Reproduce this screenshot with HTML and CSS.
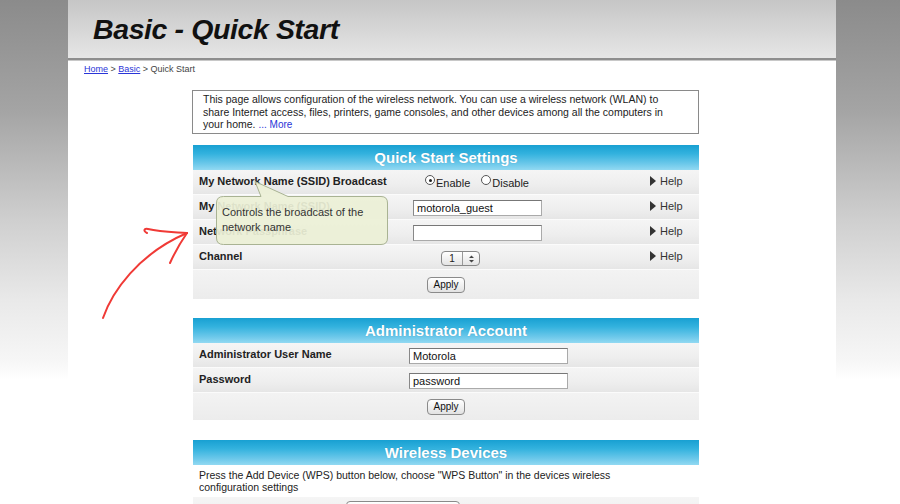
FILE: index.html
```html
<!DOCTYPE html>
<html>
<head>
<meta charset="utf-8">
<title>Basic - Quick Start</title>
<link rel="stylesheet" href="styles.css">
</head>
<body>
<div class="page">
  <header class="masthead">
    <h1 class="title">Basic - Quick Start</h1>
  </header>
  <div class="crumbs"><a href="#">Home</a> &gt; <a href="#">Basic</a> &gt; Quick Start</div>

  <div class="info">This page allows configuration of the wireless network. You can use a wireless network (WLAN) to<br>share Internet access, files, printers, game consoles, and other devices among all the computers in<br>your home. <a class="more" href="#">... More</a></div>

  <section class="panel qs">
    <div class="panel-head">Quick Start Settings</div>
    <div class="row">
      <div class="label">My Network Name (SSID) Broadcast</div>
      <div class="ctl ctl-radio">
        <span class="radio on"></span><span class="rlabel">Enable</span>
        <span class="radio"></span><span class="rlabel">Disable</span>
      </div>
      <div class="help"><span class="tri"></span>Help</div>
    </div>
    <div class="row">
      <div class="label">My Network Name (SSID)</div>
      <div class="ctl"><span class="input">motorola_guest</span></div>
      <div class="help"><span class="tri"></span>Help</div>
    </div>
    <div class="row">
      <div class="label">Network Passphrase</div>
      <div class="ctl"><span class="input"></span></div>
      <div class="help"><span class="tri"></span>Help</div>
    </div>
    <div class="row">
      <div class="label">Channel</div>
      <div class="ctl ctl-select">
        <span class="select"><span class="sval">1</span><span class="sarrows"><svg width="7" height="10" viewBox="0 0 7 10"><path d="M1 4 L3.5 1.5 L6 4 Z M1 6 L3.5 8.5 L6 6 Z" fill="#444"/></svg></span></span>
      </div>
      <div class="help"><span class="tri"></span>Help</div>
    </div>
    <div class="row row-btn"><span class="btn">Apply</span></div>
  </section>

  <section class="panel admin">
    <div class="panel-head">Administrator Account</div>
    <div class="row row-admin">
      <div class="label">Administrator User Name</div>
      <div class="ctl"><span class="input wide">Motorola</span></div>
    </div>
    <div class="row row-admin">
      <div class="label">Password</div>
      <div class="ctl"><span class="input wide">password</span></div>
    </div>
    <div class="row row-btn row-btn2"><span class="btn">Apply</span></div>
  </section>

  <section class="panel wd">
    <div class="panel-head">Wireless Devices</div>
    <p class="wd-text">Press the Add Device (WPS) button below, choose "WPS Button" in the devices wireless<br>configuration settings</p>
    <div class="row row-wps"><span class="btn btn-wps">Add Device (WPS)</span></div>
  </section>

  <div class="tooltip">
    <svg class="tip-shape" width="180" height="70" viewBox="0 0 180 70">
      <path d="M8.5 15.5 H46 L40 0.5 L73 15.5 H166 Q172.5 15.5 172.5 22 V57 Q172.5 63.5 166 63.5 H8.5 Q1.5 63.5 1.5 57 V22 Q1.5 15.5 8.5 15.5 Z" fill="rgba(236,240,214,0.93)" stroke="#a9b393" stroke-width="1"/>
    </svg>
    <div class="tip-text">Controls the broadcast of the<br>network name</div>
  </div>
</div>

<svg class="arrow" width="260" height="340" viewBox="0 0 260 340">
  <path d="M103 318 C112 292 138 254 187 233" fill="none" stroke="#f03a36" stroke-width="2" stroke-linecap="round"/>
  <path d="M187 233 C172 232 160 232 148 229 C144 228 143 231 147 233" fill="none" stroke="#f03a36" stroke-width="2" stroke-linecap="round"/>
  <path d="M187 233 C180 243 175 252 170 263" fill="none" stroke="#f03a36" stroke-width="2" stroke-linecap="round"/>
</svg>
</body>
</html>
```
FILE: styles.css
```css
html, body {
  margin: 0;
  padding: 0;
  height: 504px;
  overflow: hidden;
}
body {
  font-family: "Liberation Sans", Arial, sans-serif;
  color: #222;
  background: linear-gradient(to bottom, #8b8b8b 0px, #a4a4a4 110px, #cfcfcf 220px, #e9e9e9 300px, #f6f6f6 360px, #ffffff 380px);
  position: relative;
}
.page {
  width: 768px;
  margin-left: 68px;
  height: 504px;
  background: #fff;
  position: relative;
}
.masthead {
  height: 58px;
  background: linear-gradient(to bottom, #c6c6c6 0%, #d6d6d6 50%, #e6e6e6 100%);
  border-bottom: 2px solid #8e8e8e;
  box-shadow: 0 1px 0 #c8c8c8;
}
.title {
  margin: 0;
  padding: 15px 0 0 25px;
  font-size: 28.5px;
  line-height: 28px;
  font-weight: bold;
  font-style: italic;
  letter-spacing: -0.4px;
  color: #111;
}
.crumbs {
  margin-top: 3px;
  padding-left: 16px;
  font-size: 9px;
  line-height: 12px;
  color: #444;
}
.crumbs a {
  color: #2a35d8;
  text-decoration: underline;
}
.info {
  margin: 15px 0 0 124px;
  width: 486px;
  padding: 2px 9px 2px 10px;
  border: 1px solid #8a8a8a;
  font-size: 10.5px;
  line-height: 12.5px;
  color: #222;
  height: 38px;
}
.info .more {
  color: #2a35d8;
  text-decoration: none;
  font-size: 10px;
}
.panel {
  margin-left: 125px;
  width: 506px;
}
.qs { margin-top: 11px; }
.admin { margin-top: 19px; }
.wd { margin-top: 20px; }
.panel-head {
  height: 25px;
  line-height: 25px;
  text-align: center;
  color: #fff;
  font-weight: bold;
  font-size: 15px;
  background: linear-gradient(to bottom, #18a0d2 0%, #33b2de 35%, #6cc8ea 75%, #92d9f2 100%);
  text-shadow: 0 0 1px rgba(0,60,100,0.3);
}
.row {
  height: 24px;
  border-bottom: 1px solid #fbfbfb;
  background: linear-gradient(to bottom, #f5f5f5 0%, #eeeeee 60%, #e6e6e6 100%);
  display: grid;
  grid-template-columns: 220px 237px 49px;
  align-items: center;
  font-size: 11px;
}
.label {
  padding-left: 6px;
  font-weight: bold;
  color: #222;
  padding-bottom: 3px;
}
.ctl {
  display: flex;
  align-items: center;
}
.ctl-radio {
  padding-left: 12px;
  padding-bottom: 2px;
}
.radio {
  width: 10px;
  height: 10px;
  border: 1px solid #555;
  border-radius: 50%;
  background: #fff;
  box-sizing: border-box;
  position: relative;
  margin-top: -2px;
}
.radio.on::after {
  content: "";
  position: absolute;
  left: 2.5px;
  top: 2.5px;
  width: 3px;
  height: 3px;
  border-radius: 50%;
  background: #222;
}
.rlabel {
  margin: 4px 11px 0 1px;
  color: #222;
}
.input {
  display: block;
  width: 124px;
  height: 14px;
  border: 1px solid #aaa;
  border-top-color: #777;
  border-left-color: #888;
  background: #fff;
  font-size: 11px;
  line-height: 14px;
  padding-left: 3px;
  color: #111;
  margin-top: 1px;
}
.input.wide {
  width: 154px;
}
.ctl-select {
  padding-left: 28px;
}
.select {
  display: flex;
  width: 37px;
  height: 13px;
  border: 1px solid #888;
  border-radius: 4px;
  background: linear-gradient(to bottom, #ffffff, #e4e4e4);
  margin-top: 3px;
}
.sval {
  width: 20px;
  text-align: center;
  font-size: 10px;
  line-height: 13px;
  border-right: 1px solid #999;
}
.sarrows {
  flex: 1;
  display: flex;
  align-items: center;
  justify-content: center;
}
.help {
  display: flex;
  align-items: center;
  color: #333;
  padding-bottom: 3px;
}
.tri {
  width: 0;
  height: 0;
  border-top: 5px solid transparent;
  border-bottom: 5px solid transparent;
  border-left: 6px solid #333;
  margin-right: 4px;
}
.row-btn {
  height: 29px;
  display: flex;
  justify-content: center;
  align-items: center;
  background: linear-gradient(to bottom, #f3f3f3 0%, #ececec 100%);
  border-bottom: 0;
}
.row-btn2 {
  height: 27px;
}
.btn {
  display: inline-block;
  height: 14px;
  line-height: 14px;
  padding: 0 5px;
  font-size: 10px;
  border: 1px solid #8a8a8a;
  border-radius: 4px;
  background: linear-gradient(to bottom, #ffffff, #e2e2e2);
  color: #111;
  margin-top: 1px;
}
.row-admin {
  grid-template-columns: 216px 290px;
}
.wd-text {
  margin: 0;
  padding: 4px 6px 4px 6px;
  font-size: 10.5px;
  line-height: 12px;
  color: #222;
  background: #fff;
}
.row-wps {
  justify-content: flex-start;
  padding-left: 153px;
  align-items: flex-start;
  height: 40px;
}
.btn-wps {
  width: 102px;
  text-align: center;
  margin-top: 4px;
  height: 16px;
  line-height: 18px;
}
.tooltip {
  position: absolute;
  left: 147px;
  top: 181px;
  width: 180px;
  height: 70px;
}
.tip-shape {
  position: absolute;
  left: 0;
  top: 0;
}
.tip-text {
  position: absolute;
  left: 7px;
  top: 24px;
  font-size: 11px;
  line-height: 15px;
  color: #333;
}
.arrow {
  position: absolute;
  left: 0;
  top: 0;
  pointer-events: none;
}
```
